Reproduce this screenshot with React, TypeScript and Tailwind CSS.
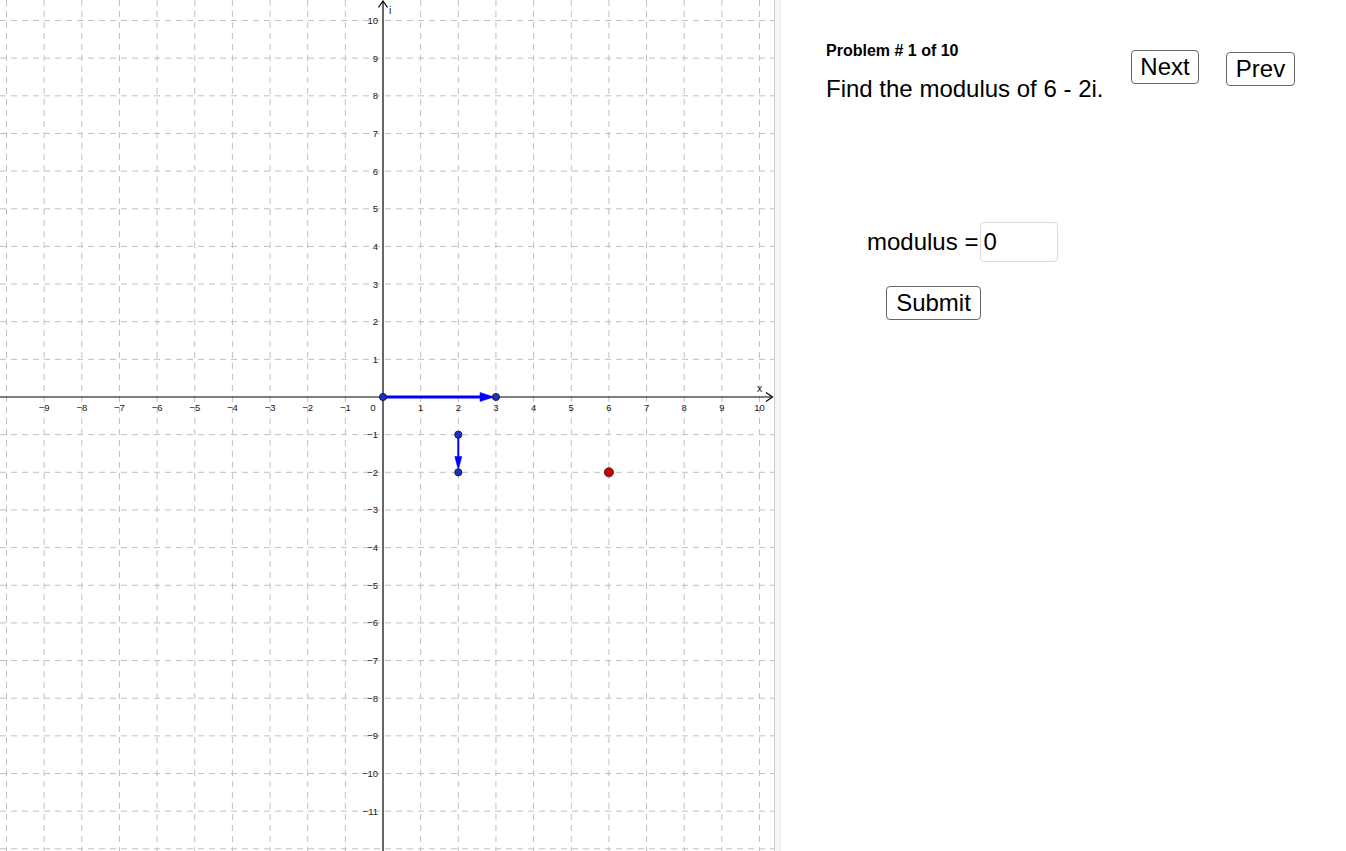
import React from "react";

const U = 37.65;
const OX = 383;
const OY = 397;
const W = 774;
const H = 851;

const px = (x: number) => OX + x * U;
const py = (y: number) => OY - y * U;

function minus(n: number) {
  return n < 0 ? `\u2212${Math.abs(n)}` : `${n}`;
}

function Graph() {
  const xs: number[] = [];
  for (let i = -10; i <= 10; i++) xs.push(i);
  const ys: number[] = [];
  for (let i = -12; i <= 10; i++) ys.push(i);

  const blue = [
    [0, 0],
    [3, 0],
    [2, -1],
    [2, -2],
  ];

  return (
    <svg width={W} height={H} viewBox={`0 0 ${W} ${H}`} className="block">
      <g stroke="#c0c0c0" strokeWidth={1} strokeDasharray="6 5" fill="none">
        {xs.map((i) =>
          i === 0 ? null : (
            <line key={`vx${i}`} x1={px(i)} y1={0} x2={px(i)} y2={H} />
          )
        )}
        {ys.map((i) =>
          i === 0 ? null : (
            <line key={`hy${i}`} x1={0} y1={py(i)} x2={W} y2={py(i)} />
          )
        )}
      </g>

      {/* axes */}
      <g stroke="#000" strokeWidth={1.2} fill="none">
        <line x1={0} y1={OY} x2={772} y2={OY} />
        <polyline points={`766,392.5 772.5,397 766,401.5`} />
        <line x1={OX} y1={H} x2={OX} y2={1.5} />
        <polyline points={`378.5,7.5 383,1 387.5,7.5`} />
      </g>

      <g
        fontFamily='"Liberation Sans", Arial, sans-serif'
        fontSize={9.5}
        fill="#1a1a1a"
      >
        {xs.map((i) =>
          i === 0 || i === -10 ? null : (
            <text key={`lx${i}`} x={px(i)} y={411} textAnchor="middle">
              {minus(i)}
            </text>
          )
        )}
        <text x={373} y={411} textAnchor="middle">
          0
        </text>
        {ys.map((i) =>
          i === 0 || i === -12 ? null : (
            <text key={`ly${i}`} x={378} y={py(i) + 3.5} textAnchor="end">
              {minus(i)}
            </text>
          )
        )}
        <text x={757} y={392} fontSize={10.5}>
          x
        </text>
        <text x={389} y={14} fontSize={10.5}>
          i
        </text>
      </g>

      {/* vectors */}
      <g stroke="#0000ff" fill="#0000ff">
        <line x1={px(0)} y1={OY} x2={480} y2={OY} strokeWidth={3} />
        <polygon points={`480,392.5 494,397 480,401.5`} strokeWidth={0.5} />
        <line x1={px(2)} y1={py(-1)} x2={px(2)} y2={457} strokeWidth={2} />
        <polygon
          points={`${px(2) - 3.5},456.5 ${px(2)},470 ${px(2) + 3.5},456.5`}
          strokeWidth={0.5}
        />
      </g>

      {blue.map(([x, y]) => (
        <circle
          key={`p${x}${y}`}
          cx={px(x)}
          cy={py(y)}
          r={3.6}
          fill="#1f30c8"
          stroke="#111"
          strokeWidth={0.8}
        />
      ))}
      <circle
        cx={px(6)}
        cy={py(-2)}
        r={4.6}
        fill="#cc0000"
        stroke="#333"
        strokeWidth={0.9}
      />
    </svg>
  );
}

export default function App() {
  return (
    <div
      className="flex h-[851px] w-[1346px] overflow-hidden bg-white text-black"
      style={{ fontFamily: '"Liberation Sans", Arial, Helvetica, sans-serif' }}
    >
      <div className="w-[774px] shrink-0">
        <Graph />
      </div>
      <div className="w-[7px] shrink-0 border-x border-l-[#cfcfcf] border-r-[#e8e8e8] bg-[#f5f5f5]" />

      <div className="flex-1 pl-[45px]">
        <div className="flex h-[103px] items-start">
          <div className="w-[305px]">
            <p className="mt-[42px] text-[16px] leading-[18px] font-bold">
              Problem # 1 of 10
            </p>
            <p className="mt-[15px] text-[24px] leading-[28px]">
              Find the modulus of 6 - 2i.
            </p>
          </div>
          <button
            type="button"
            className="mt-[50px] h-[34px] w-[68px] rounded-[4px] border border-[#666] bg-white text-[24px] leading-none"
          >
            Next
          </button>
          <button
            type="button"
            className="mt-[52px] ml-[27px] h-[34px] w-[69px] rounded-[4px] border border-[#666] bg-white text-[24px] leading-none"
          >
            Prev
          </button>
        </div>

        <div className="mt-[119px] ml-[41px] flex h-[40px] items-center">
          <span className="text-[24px] leading-[28px]">modulus =</span>
          <div className="ml-[2px] flex h-[40px] w-[78px] items-center rounded-[4px] border border-[#dcdcdc] px-[2px] text-[24px]">
            0
          </div>
        </div>

        <button
          type="button"
          className="mt-[24px] ml-[60px] h-[34px] w-[95px] rounded-[4px] border border-[#666] bg-white text-[24px] leading-none"
        >
          Submit
        </button>
      </div>
    </div>
  );
}
